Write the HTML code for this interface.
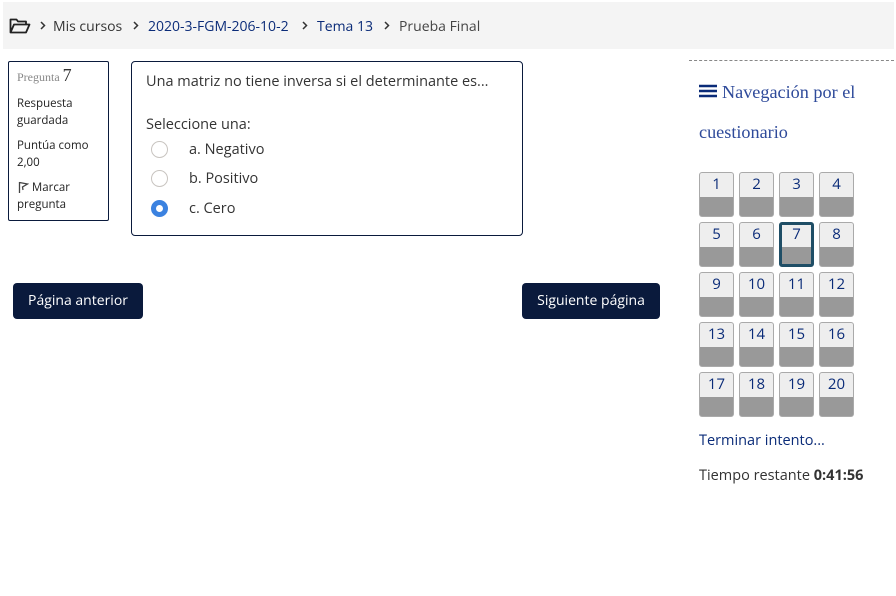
<!DOCTYPE html>
<html><head><meta charset="utf-8"><style>
*{margin:0;padding:0;box-sizing:border-box}
body{width:896px;height:596px;background:#fff;font-family:"Open Sans","Liberation Sans","DejaVu Sans",sans-serif;color:#333;position:relative;overflow:hidden}
.a{position:absolute;white-space:nowrap}
.bc{position:absolute;left:3px;top:2px;width:891px;height:47px;background:#f4f4f4}
.bc span{position:absolute;top:15px;font-size:14px}
.bc svg.c{position:absolute;top:19px}
.link{color:#0a2b78}
.info{position:absolute;left:8px;top:61px;width:101px;height:160px;border:1px solid #0a1a3c;border-radius:2px;font-size:11.5px;color:#222;line-height:17px}
.q{position:absolute;left:131px;top:61px;width:392px;height:175px;border:1px solid #0a1a3c;border-radius:4px;font-size:14.5px;color:#333}
.r{position:absolute;left:19px;width:17px;height:17px;border:1.5px solid #c8c4c0;border-radius:50%}
.btn{position:absolute;height:36px;background:#0a1a3c;border-radius:4px;color:#fff;font-size:14px;line-height:36px;text-align:center}
.nav{position:absolute;left:689px;top:60px;width:205px;border-top:1px dashed #888}
.cell{position:absolute;width:35px;height:45px;border:1px solid #aaa;border-radius:3px;background:linear-gradient(#eee 0,#eee 24px,#999 24px);text-align:center;font-size:15px;color:#0a2b78;line-height:22px;overflow:hidden}
.cur{border:3px solid #1f4e66;line-height:18px;background:linear-gradient(#eee 0,#eee 22px,#999 22px)}
</style></head><body>
<div class="bc">
<svg class="a" style="left:6px;top:15px" width="22" height="17" viewBox="0 0 22 17"><path d="M1.5 15.5V2.5h6l1.5 2h8v3M1.5 15.5l3.5-8h15.5l-3.5 8z" fill="none" stroke="#222" stroke-width="1.8" stroke-linejoin="round"/></svg>
<svg class="c" style="left:37px" width="6" height="9" viewBox="0 0 6 9"><path d="M1 1l3.5 3.5L1 8" fill="none" stroke="#333" stroke-width="1.5"/></svg>
<span style="left:50px;color:#333">Mis cursos</span>
<svg class="c" style="left:130px" width="6" height="9" viewBox="0 0 6 9"><path d="M1 1l3.5 3.5L1 8" fill="none" stroke="#333" stroke-width="1.5"/></svg>
<span style="left:145px" class="link">2020-3-FGM-206-10-2</span>
<svg class="c" style="left:299px" width="6" height="9" viewBox="0 0 6 9"><path d="M1 1l3.5 3.5L1 8" fill="none" stroke="#333" stroke-width="1.5"/></svg>
<span style="left:314px" class="link">Tema 13</span>
<svg class="c" style="left:381px" width="6" height="9" viewBox="0 0 6 9"><path d="M1 1l3.5 3.5L1 8" fill="none" stroke="#333" stroke-width="1.5"/></svg>
<span style="left:396px;color:#444">Prueba Final</span>
</div>

<div class="info">
<div class="a" style="left:8px;top:5px;font-family:'Liberation Serif',serif;color:#888;font-size:12px">Pregunta <span style="font-size:18px;color:#333">7</span></div>
<div class="a" style="left:8px;top:33px">Respuesta<br>guardada</div>
<div class="a" style="left:8px;top:75px">Puntúa como<br>2,00</div>
<svg class="a" style="left:9px;top:119px" width="11" height="13" viewBox="0 0 11 13"><path d="M1.5 1v11M1.5 1.5l8 1.5-5 3 .5 3" fill="none" stroke="#444" stroke-width="1.3"/></svg>
<div class="a" style="left:8px;top:117px">&nbsp;&nbsp;&nbsp;&nbsp;&nbsp;Marcar<br>pregunta</div>
</div>

<div class="q">
<div class="a" style="left:14px;top:10px">Una matriz no tiene inversa si el determinante es...</div>
<div class="a" style="left:14px;top:53px">Seleccione una:</div>
<div class="r" style="top:79px"></div><div class="a" style="left:57px;top:78px">a. Negativo</div>
<div class="r" style="top:108px"></div><div class="a" style="left:57px;top:107px">b. Positivo</div>
<div class="r" style="top:138px;border:5px solid #3b82e0;background:#fff"></div><div class="a" style="left:57px;top:137px">c. Cero</div>
</div>

<div class="btn" style="left:13px;top:283px;width:130px">Página anterior</div>
<div class="btn" style="left:522px;top:283px;width:138px">Siguiente página</div>

<div class="nav"></div>
<svg class="a" style="left:699px;top:84px" width="18" height="14" viewBox="0 0 18 14"><path d="M0 2h18M0 7h18M0 12h18" stroke="#0a2b78" stroke-width="2.6"/></svg>
<div class="a" style="left:722px;top:82px;font-family:'Liberation Serif',serif;font-size:18.2px;color:#2e4a9a">Navegación por el</div>
<div class="a" style="left:699px;top:122px;font-family:'Liberation Serif',serif;font-size:18.2px;color:#2e4a9a">cuestionario</div>

<div class="cell" style="left:699px;top:172px">1</div><div class="cell" style="left:739px;top:172px">2</div><div class="cell" style="left:779px;top:172px">3</div><div class="cell" style="left:819px;top:172px">4</div>
<div class="cell" style="left:699px;top:222px">5</div><div class="cell" style="left:739px;top:222px">6</div><div class="cell cur" style="left:779px;top:222px">7</div><div class="cell" style="left:819px;top:222px">8</div>
<div class="cell" style="left:699px;top:272px">9</div><div class="cell" style="left:739px;top:272px">10</div><div class="cell" style="left:779px;top:272px">11</div><div class="cell" style="left:819px;top:272px">12</div>
<div class="cell" style="left:699px;top:322px">13</div><div class="cell" style="left:739px;top:322px">14</div><div class="cell" style="left:779px;top:322px">15</div><div class="cell" style="left:819px;top:322px">16</div>
<div class="cell" style="left:699px;top:372px">17</div><div class="cell" style="left:739px;top:372px">18</div><div class="cell" style="left:779px;top:372px">19</div><div class="cell" style="left:819px;top:372px">20</div>

<div class="a link" style="left:699px;top:431px;font-size:14.5px">Terminar intento...</div>
<div class="a" style="left:699px;top:466px;font-size:14.5px;color:#333">Tiempo restante <b>0:41:56</b></div>
</body></html>
